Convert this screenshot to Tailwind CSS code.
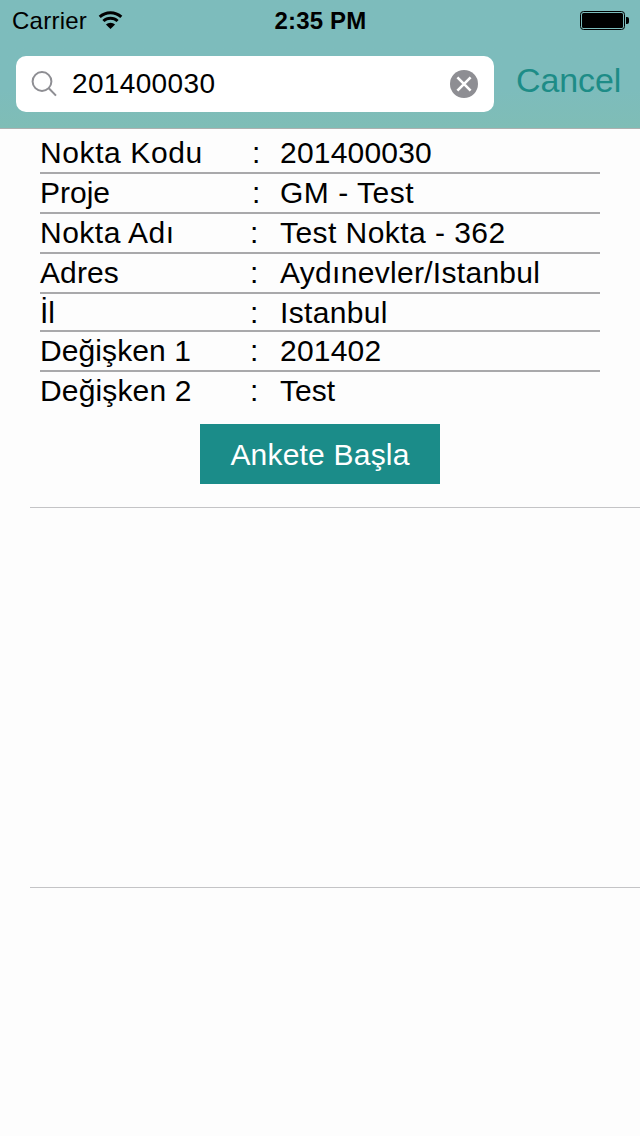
<!DOCTYPE html>
<html lang="tr">
<head>
    <meta charset="UTF-8">
    <meta name="viewport" content="width=device-width, initial-scale=1.0">
    <title>Nokta Arama</title>
    <script src="https://cdn.jsdelivr.net/npm/@tailwindcss/browser@4"></script>
</head>
<body class="w-[640px] h-[1136px] overflow-hidden bg-[#fdfdfd] text-black font-['Liberation_Sans',Arial,sans-serif]">
    <header class="h-[129px] bg-linear-to-b from-[#7dbcbc] from-70% to-[#7fbdb6] border-b border-[#adb0b0]">
        <!-- Status bar -->
        <div class="grid grid-cols-3 items-start h-10 pl-3 pr-[11px]">
            <div class="flex items-start gap-[11px] text-2xl leading-[42px]">
                <span class="tracking-[0.25px]">Carrier</span>
                <svg class="w-[25px] h-[19px] mt-[11px]" viewBox="0 0 25 19" fill="none" stroke="#000" stroke-width="3">
                    <path d="M1.7 5.9A16 16 0 0 1 23.3 5.9"/>
                    <path d="M5.4 10A10.4 10.4 0 0 1 19.6 10"/>
                    <path d="M12.5 18L7.9 13.6A6.4 6.4 0 0 1 17.1 13.6Z" fill="#000" stroke="none"/>
                </svg>
            </div>
            <span class="text-center text-2xl leading-[42px] font-bold tracking-[0.15px]">2:35 PM</span>
            <svg class="justify-self-end w-[49px] h-[19px] mt-[11px]" viewBox="0 0 49 19">
                <rect x="0.5" y="0.5" width="44" height="18" rx="3" fill="none" stroke="#000"/>
                <rect x="2" y="2" width="41" height="15" rx="1.5"/>
                <path d="M46 6h1q2 0 2 2v3q0 2-2 2h-1z"/>
            </svg>
        </div>
        <!-- Search bar -->
        <div class="flex pt-4 pl-4">
            <div class="flex items-center w-[478px] h-14 pl-[15px] pr-4 bg-white rounded-[10px]">
                <svg class="w-[26px] h-[26px]" viewBox="0 0 26 26" fill="none" stroke="#8e8e93" stroke-width="2">
                    <circle cx="11" cy="10.5" r="9.4"/>
                    <path d="M17.8 17.2L25 24.6"/>
                </svg>
                <span class="flex-1 ml-[15px] text-[28px] leading-[56px] tracking-[0.35px]">201400030</span>
                <svg class="w-7 h-7" viewBox="0 0 28 28">
                    <circle cx="14" cy="14" r="14" fill="#8e8e93"/>
                    <path d="M7.4 7.4L20.6 20.6M20.6 7.4L7.4 20.6" stroke="#fff" stroke-width="2.6"/>
                </svg>
            </div>
            <span class="ml-[22px] text-[34px] leading-[48px] text-[#1d8c87] tracking-[-0.1px]">Cancel</span>
        </div>
    </header>

    <main>
        <section class="h-[379px] pt-[5px] ml-[30px] pl-[10px] border-b border-[#c4c4c6]">
            <div class="w-[560px] text-[30px] leading-[38px] whitespace-nowrap">
                <div class="flex h-10 border-b-2 border-[#a9a9ab]"><span class="w-[212px] tracking-[0.6px]">Nokta Kodu</span><span class="w-[28px]">:</span><span class="tracking-[0.2px]">201400030</span></div>
                <div class="flex h-10 border-b-2 border-[#a9a9ab]"><span class="w-[212px]">Proje</span><span class="w-[28px]">:</span><span class="tracking-[0.5px]">GM - Test</span></div>
                <div class="flex h-10 border-b-2 border-[#a9a9ab]"><span class="w-[210px] tracking-[0.5px]">Nokta Adı</span><span class="w-[30px]">:</span><span class="tracking-[0.45px]">Test Nokta - 362</span></div>
                <div class="flex h-10 border-b-2 border-[#a9a9ab]"><span class="w-[210px] tracking-[0.1px]">Adres</span><span class="w-[30px]">:</span><span class="tracking-[0.3px]">Aydınevler/Istanbul</span></div>
                <div class="flex h-[38px] border-b-2 border-[#a9a9ab]"><span class="w-[210px]">İl</span><span class="w-[30px]">:</span><span class="tracking-[0.35px]">Istanbul</span></div>
                <div class="flex h-10 border-b-2 border-[#a9a9ab]"><span class="w-[210px] tracking-[0.1px]">Değişken 1</span><span class="w-[30px]">:</span><span class="tracking-[0.2px]">201402</span></div>
                <div class="flex h-10"><span class="w-[210px] tracking-[0.15px]">Değişken 2</span><span class="w-[30px]">:</span><span>Test</span></div>
            </div>
            <button class="block w-60 h-[60px] mt-3 ml-40 bg-[#1b8c89] text-white text-[30px] leading-[62px] tracking-[0.2px]">Ankete Başla</button>
        </section>
        <div class="h-[380px] ml-[30px] border-b border-[#c4c4c6]"></div>
    </main>
</body>
</html>
